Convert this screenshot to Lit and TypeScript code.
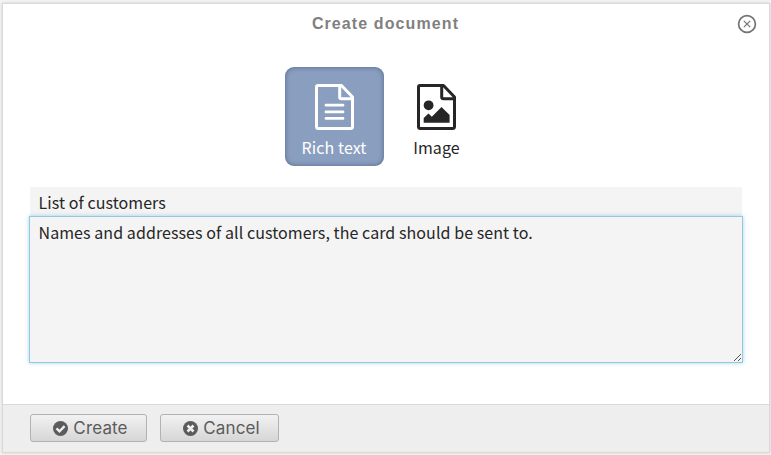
import { LitElement, html, css, svg } from "lit";
import { customElement, state } from "lit/decorators.js";

const page = svg`
  <path d="M3 1.5H26.5L37.5 13V42.5Q37.5 44.5 35.5 44.5H3.5Q1.5 44.5 1.5 42.5V3Q1.5 1.5 3 1.5Z" fill="none" stroke="currentColor" stroke-width="3" stroke-linejoin="round"/>
  <path d="M24.7 2V13Q24.7 14.7 26.5 14.7H37" fill="none" stroke="currentColor" stroke-width="3"/>`;

@customElement("app-root")
export class AppRoot extends LitElement {
  @state() private kind = "text";

  static styles = css`
    :host {
      display: block;
      box-sizing: border-box;
      height: 455px;
      padding: 3px 1px 2px 2px;
      background: #f4f4f4;
      overflow: hidden;
      font-family: "Noto Sans CJK SC", "Noto Sans", sans-serif;
      color: #262626;
    }
    * { box-sizing: border-box; }
    button { font: inherit; margin: 0; padding: 0; border: 0; background: none; color: inherit; }
    svg { display: block; flex: none; }
    .dialog {
      height: 450px;
      display: flex;
      flex-direction: column;
      background: #fff;
      border: 1px solid #d9d9d9;
      box-shadow: 0 0 3px rgba(0, 0, 0, 0.15);
    }
    .head {
      height: 63px;
      display: grid;
      grid-template-columns: 40px 1fr 40px;
      align-items: start;
    }
    .title {
      grid-column: 2;
      margin: 10px 0 0;
      padding-right: 1px;
      text-align: center;
      font: bold 16px/20px "Liberation Sans", Arial, sans-serif;
      letter-spacing: 1.1px;
      color: #808080;
    }
    .close { padding: 10px 0 0 8px; color: #737373; }
    .kinds { display: flex; gap: 3px; padding-left: 282px; height: 99px; }
    .kind {
      width: 99px;
      height: 99px;
      border-radius: 9px;
      display: flex;
      flex-direction: column;
      align-items: center;
      padding: 17px 0 0;
      font-size: 16px;
      line-height: 24px;
      letter-spacing: 0.1px;
    }
    .kind span { margin-top: 5px; white-space: nowrap; }
    .kind.on {
      background: #8a9ebf;
      color: #fff;
      box-shadow: inset 0 0 5px rgba(30, 50, 90, 0.5);
    }
    .kind.on span { padding-right: 1px; }
    .fields { margin: 21px 26px 0; font-size: 16px; letter-spacing: 0.075px; }
    .name {
      height: 29px;
      margin: 0 1px;
      padding: 3px 8.5px 0;
      line-height: 24px;
      background: #f4f4f4;
    }
    .body {
      position: relative;
      height: 147px;
      padding: 3px 8.5px;
      line-height: 24px;
      background: #f4f4f4;
      border: 1px solid #94c8e0;
      box-shadow: 0 0 4px rgba(100, 185, 225, 0.6);
    }
    .grip { position: absolute; right: 0; bottom: 0; }
    .foot {
      margin-top: auto;
      height: 48px;
      display: flex;
      gap: 13px;
      padding: 9px 27px;
      background: #eee;
      border-top: 1px solid #d9d9d9;
    }
    .action {
      height: 28px;
      display: flex;
      align-items: center;
      justify-content: center;
      gap: 5px;
      border: 1px solid #b2b2b2;
      border-radius: 3px;
      background: linear-gradient(#f2f2f2, #d6d6d6);
      color: #5b5b5b;
      font: 17px/26px Inter, "Liberation Sans", sans-serif;
      letter-spacing: 0.15px;
    }
    .create { width: 117px; padding-left: 4px; }
    .cancel { width: 119px; padding-left: 4px; }
  `;

  render() {
    return html`
      <div class="dialog">
        <header class="head">
          <h1 class="title">Create document</h1>
          <button class="close" aria-label="Close">
            <svg width="20" height="20" viewBox="0 0 20 20" fill="none" stroke="currentColor">
              <circle cx="10" cy="10" r="8.4" stroke-width="1.7"/>
              <path d="M6.8 6.8L13.2 13.2M13.2 6.8L6.8 13.2" stroke-width="1.2"/>
            </svg>
          </button>
        </header>
        <div class="kinds">
          <button class="kind ${this.kind === "text" ? "on" : ""}" @click=${() => (this.kind = "text")}>
            <svg width="39" height="46" viewBox="0 0 39 46">${page}
              <path d="M11 21.2H28M11 27.9H28M11 34.4H28" stroke="currentColor" stroke-width="2.8" stroke-linecap="round"/>
            </svg>
            <span>Rich text</span>
          </button>
          <button class="kind ${this.kind === "image" ? "on" : ""}" @click=${() => (this.kind = "image")}>
            <svg width="39" height="46" viewBox="0 0 39 46">${page}
              <circle cx="11.6" cy="21.3" r="4.9" fill="currentColor"/>
              <path d="M6.7 38.7V34L11.5 29.5L14.8 32.8L24.5 23L32.6 31V38.7Z" fill="currentColor"/>
            </svg>
            <span>Image</span>
          </button>
        </div>
        <div class="fields">
          <div class="name">List of customers</div>
          <div class="body">Names and addresses of all customers, the card should be sent to.
            <svg class="grip" width="9" height="9" viewBox="0 0 9 9" stroke="#555" stroke-width="1">
              <path d="M1 8L8 1M5 8L8 5"/>
            </svg>
          </div>
        </div>
        <footer class="foot">
          <button class="action create">
            <svg width="15" height="15" viewBox="0 0 15 15">
              <circle cx="7.5" cy="7.5" r="7.5" fill="currentColor"/>
              <path d="M3.5 7.4L6.5 10.3L11.6 5.2" fill="none" stroke="#eee" stroke-width="2.4"/>
            </svg>Create</button>
          <button class="action cancel">
            <svg width="15" height="15" viewBox="0 0 15 15">
              <circle cx="7.5" cy="7.5" r="7.5" fill="currentColor"/>
              <path d="M4.5 4.5L10.5 10.5M10.5 4.5L4.5 10.5" fill="none" stroke="#eee" stroke-width="2.6"/>
            </svg>Cancel</button>
        </footer>
      </div>
    `;
  }
}
